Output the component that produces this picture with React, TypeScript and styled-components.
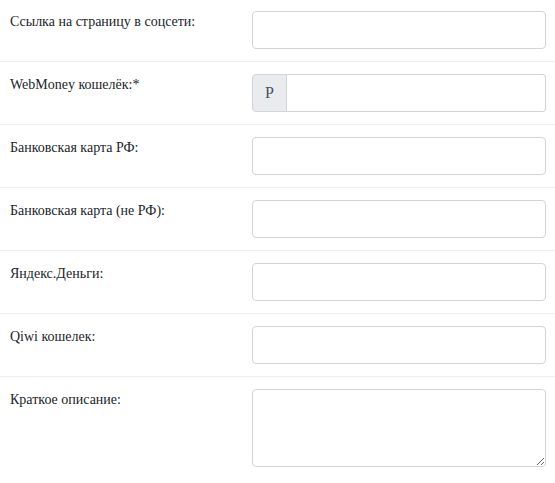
import styled, { createGlobalStyle } from "styled-components";

const GlobalStyle = createGlobalStyle`
  html, body {
    margin: 0;
    padding: 0;
    background: #fff;
  }
  body {
    font-family: "Liberation Serif", "Times New Roman", serif;
    font-size: 14px;
    color: #212529;
  }
`;

type Field = { label: string; addon?: string; multiline?: boolean };

const fields: Field[] = [
  { label: "Ссылка на страницу в соцсети:" },
  { label: "WebMoney кошелёк:*", addon: "Р" },
  { label: "Банковская карта РФ:" },
  { label: "Банковская карта (не РФ):" },
  { label: "Яндекс.Деньги:" },
  { label: "Qiwi кошелек:" },
  { label: "Краткое описание:", multiline: true },
];

function App() {
  return <>
    <GlobalStyle />
    <Form>
      {fields.map((f, i) => (
        <Row key={i} $first={i === 0}>
          <Label>{f.label}</Label>
          <Control>
            {f.multiline ? (
              <TextArea />
            ) : f.addon ? (
              <Group>
                <Addon>{f.addon}</Addon>
                <GroupInput type="text" />
              </Group>
            ) : (
              <Input type="text" />
            )}
          </Control>
        </Row>
      ))}
    </Form>
  </>
}

export default App;

const serif = `"Liberation Serif", "Times New Roman", serif`;

const Form = styled.form`
  width: 555px;
  font-family: ${serif};
`

const Row = styled.div<{ $first?: boolean }>`
  display: grid;
  grid-template-columns: 242px 1fr;
  padding: ${p => p.$first ? "11px" : "12px"} 9px 12px 10px;
  border-top: ${p => p.$first ? "none" : "1px solid #eeeeee"};
`

const Label = styled.label`
  font-family: ${serif};
  font-size: 14px;
  line-height: 21px;
  color: #212529;
`

const Control = styled.div`
  display: flex;
`

const Input = styled.input`
  box-sizing: border-box;
  width: 100%;
  height: 38px;
  border: 1px solid #d4d4d4;
  border-radius: 4px;
  padding: 6px 12px;
  font-family: ${serif};
  font-size: 14px;
  outline: none;
`

const Group = styled.div`
  display: flex;
  width: 100%;
  height: 38px;
`

const Addon = styled.span`
  box-sizing: border-box;
  width: 35px;
  display: flex;
  align-items: center;
  justify-content: center;
  background: #e9ecef;
  border: 1px solid #d4d4d4;
  border-radius: 4px 0 0 4px;
  color: #495057;
  font-family: ${serif};
  font-size: 16px;
`

const GroupInput = styled(Input)`
  flex: 1;
  border-left: none;
  border-radius: 0 4px 4px 0;
`

const TextArea = styled.textarea`
  box-sizing: border-box;
  width: 100%;
  height: 78px;
  border: 1px solid #d4d4d4;
  border-radius: 4px;
  padding: 6px 12px;
  font-family: ${serif};
  font-size: 14px;
  outline: none;
  resize: vertical;
  display: block;
`
